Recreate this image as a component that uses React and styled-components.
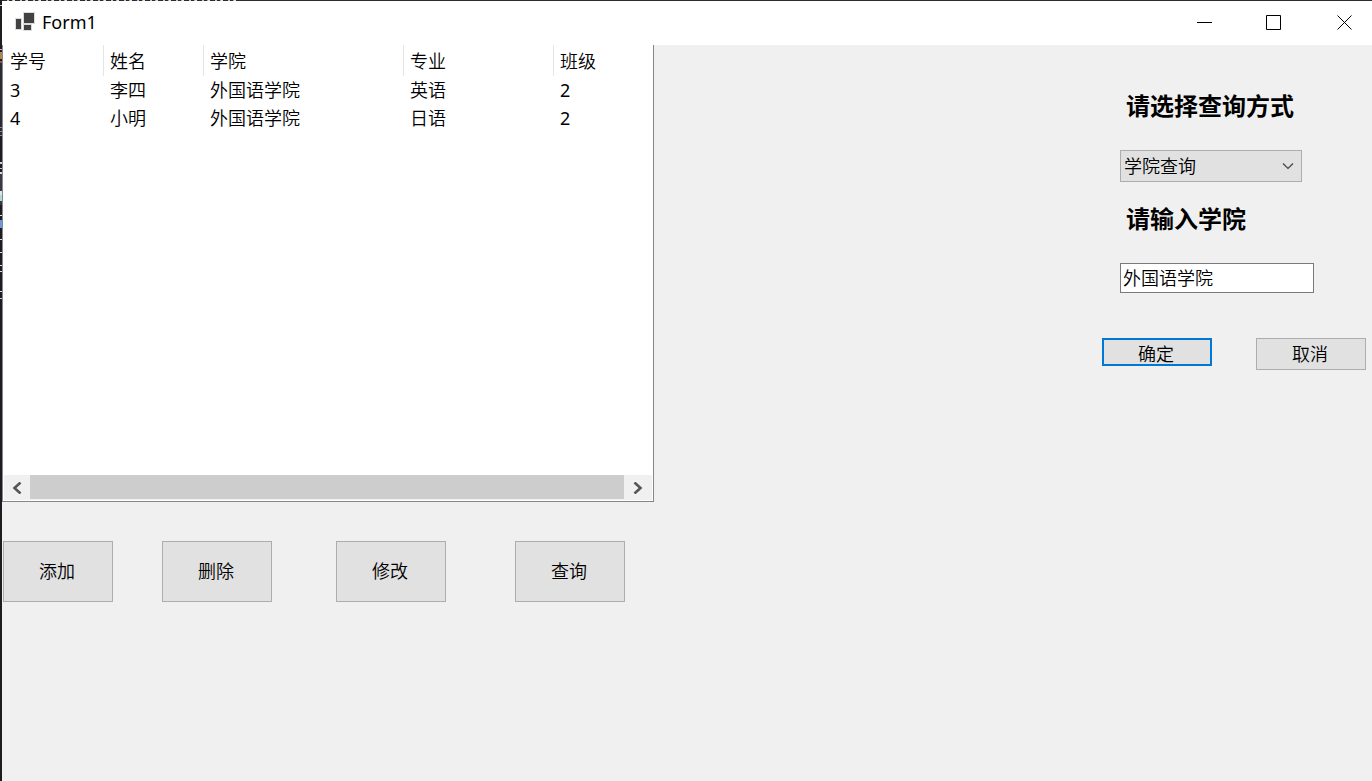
import React, { useState } from "react";
import styled, { createGlobalStyle } from "styled-components";

const GlobalStyle = createGlobalStyle`
  *, *::before, *::after { box-sizing: border-box; }
  body {
    margin: 0;
    background: #f0f0f0;
    color: #000;
    font: 350 18px/28px "Noto Sans", "Noto Sans CJK SC", sans-serif;
  }
  button, input, select { font: inherit; color: inherit; border-radius: 0; }
`;

const topSpecks =
  "repeating-linear-gradient(90deg, #2d2a31 0 5px, #b9c8dc 5px 7px, #2d2a31 7px 10px, #c9a27c 10px 11px, #e4e4e4 11px 13px)";

const leftSpecks = `linear-gradient(180deg,
  #1d1c20 0 5px, #d0d0d0 5px 6px, #1d1c20 6px 49px, #bdbdbd 49px 50px,
  #1d1c20 50px 52px, #b5834f 52px 59px, #1d1c20 59px 61px, #8a5a42 61px 63px,
  #2b2a30 63px 127px, #8a8a8e 127px 128px, #2b2a30 128px 131px, #8a8a8e 131px 132px,
  #2b2a30 132px 135px, #8a8a8e 135px 136px, #1d1c20 136px 162px, #c8d4e4 162px 164px,
  #1d1c20 164px 168px, #d8c0a0 168px 169px, #1d1c20 169px 172px, #d8d8e4 172px 174px,
  #3b3a44 174px 191px, #e4e4dc 191px 195px, #a8dcd8 195px 201px, #3b3a44 201px 205px,
  #1d1c20 205px 215px, #e0e0e0 215px 216px, #1d1c20 216px 220px, #6a9ad8 220px 228px,
  #1d1c20 228px 239px, #e0e0e0 239px 240px, #1d1c20 240px 252px, #e0e0e0 252px 253px,
  #1d1c20 253px 265px, #e0e0e0 265px 266px, #1d1c20 266px 271px, #e0e0e0 271px 272px,
  #1d1c20 272px 291px, #e0e0e0 291px 292px, #1d1c20 292px 298px, #c0c8e0 298px 299px,
  #1d1c20 299px)`;

const Desktop = styled.div`
  display: flex;
  min-height: 100vh;
  padding: 1px 0 0 2px;
  background:
    ${topSpecks} 2px 0 / 234px 1px no-repeat,
    ${leftSpecks} 0 0 / 2px 100% no-repeat,
    #2d2a31;
`;

const Window = styled.div`
  flex: 1;
  display: flex;
  flex-direction: column;
  background: #f0f0f0;
`;

const TitleBar = styled.header`
  display: flex;
  align-items: center;
  gap: 6px;
  height: 44px;
  padding-left: 13px;
  background: #fff;
`;

const Title = styled.h1`
  flex: 1;
  margin: 0;
  padding-bottom: 2px;
  font-size: 18px;
  font-weight: 400;
`;

const Controls = styled.div`
  display: flex;
  gap: 14px;
`;

const ControlButton = styled.button`
  display: flex;
  align-items: center;
  justify-content: center;
  width: 56px;
  height: 44px;
  padding: 0;
  border: 0;
  background: transparent;
`;

const Client = styled.main`
  flex: 1;
  display: flex;
  align-items: flex-start;
  justify-content: space-between;
`;

const ListView = styled.section`
  display: flex;
  flex-direction: column;
  width: 652px;
  height: 457px;
  padding-bottom: 1px;
  border: 1px solid #828790;
  border-top: 0;
  background: #fff;
`;

const ListBody = styled.div`
  flex: 1;
`;

const Table = styled.table`
  table-layout: fixed;
  width: 650px;
  border-collapse: separate;
  border-spacing: 0;
`;

const HeaderCell = styled.th`
  width: ${(p) => p.$width}px;
  height: 31px;
  padding: 0 6px;
  border-right: 1px solid ${(p) => (p.$last ? "#fff" : "#e5e5e5")};
  font-weight: inherit;
  text-align: left;
  &:first-child { padding-left: 7px; }
`;

const Cell = styled.td`
  height: 28px;
  padding: 0 6px;
  font-weight: ${(p) => (p.$numeric ? 400 : "inherit")};
  &:first-child { padding-left: 7px; }
`;

const ScrollBar = styled.div`
  display: flex;
  height: 25px;
  margin: 0 1px;
  background: #f0f0f0;
`;

const ScrollArrow = styled.button`
  display: flex;
  align-items: center;
  justify-content: center;
  width: ${(p) => p.$width}px;
  padding: 0;
  border: 0;
  background: transparent;
`;

const ScrollThumb = styled.div`
  flex: 1;
  height: 24px;
  background: #cdcdcd;
`;

const Actions = styled.div`
  display: grid;
  grid-template-columns: 159px 174px 179px 110px;
  margin: 39px 0 0 1px;
`;

const Button = styled.button`
  width: 110px;
  height: ${(p) => p.$height}px;
  padding: 0 2px 1px 0;
  border: ${(p) => (p.$primary ? "2px solid #0078d7" : "1px solid #adadad")};
  background: #e1e1e1;
`;

const QueryForm = styled.form`
  display: flex;
  flex-direction: column;
  width: 264px;
  margin: 45px 6px 0 0;
`;

const Field = styled.div`
  display: flex;
  flex-direction: column;
  align-items: flex-start;
  padding-left: 18px;
`;

const Label = styled.label`
  height: 32px;
  margin: 0 0 28px 6px;
  font-size: 24px;
  font-weight: 700;
  line-height: 32px;
`;

const SelectBox = styled.div`
  display: grid;
  align-items: center;
  width: 182px;
  margin-bottom: 21px;
  > * { grid-area: 1 / 1; }
  svg { justify-self: end; margin-right: 7px; pointer-events: none; }
`;

const Select = styled.select`
  appearance: none;
  width: 100%;
  height: 32px;
  padding: 0 3px;
  border: 1px solid #adadad;
  background: #e1e1e1;
`;

const Input = styled.input`
  width: 194px;
  height: 30px;
  padding: 0 2px 2px;
  border: 1px solid #7a7a7a;
  background: #fff;
  outline: 0;
`;

const FormButtons = styled.div`
  display: flex;
  align-items: flex-start;
  justify-content: space-between;
  margin-top: 45px;
`;

const columns = [
  { name: "学号", width: 101, numeric: true },
  { name: "姓名", width: 100 },
  { name: "学院", width: 200 },
  { name: "专业", width: 150 },
  { name: "班级", width: 99, numeric: true },
];

const students = [
  ["3", "李四", "外国语学院", "英语", "2"],
  ["4", "小明", "外国语学院", "日语", "2"],
];

const controls = [
  { name: "最小化", d: "M1 7.5H16" },
  { name: "最大化", d: "M0.5 0.5H14.5V14.5H0.5Z" },
  { name: "关闭", d: "M1.5 0.5L15.5 14.5M15.5 0.5L1.5 14.5" },
];

function FormIcon() {
  return (
    <svg width="21" height="22" viewBox="0 0 21 22" aria-hidden="true">
      <g fill="#424242" stroke="#dcdcdc">
        <path d="M0.5 6.5H6.5V17.5H0.5Z" />
        <path d="M8.5 12.5H16.5V18.5H8.5Z" />
        <path d="M8.5 0.5H19.5V11.5H8.5Z" />
      </g>
    </svg>
  );
}

function Arrow({ d }) {
  return (
    <svg width="10" height="12" viewBox="0 0 10 12" aria-hidden="true">
      <path d={d} fill="none" stroke="#555" strokeWidth="2.6" />
    </svg>
  );
}

export default function App() {
  const [mode, setMode] = useState("学院查询");
  const [college, setCollege] = useState("外国语学院");

  return (
    <Desktop>
      <GlobalStyle />
      <Window>
        <TitleBar>
          <FormIcon />
          <Title>Form1</Title>
          <Controls>
            {controls.map((c) => (
              <ControlButton key={c.name} type="button" aria-label={c.name}>
                <svg width="16" height="16" viewBox="0 0 16 16" aria-hidden="true">
                  <path d={c.d} fill="none" stroke="#000" />
                </svg>
              </ControlButton>
            ))}
          </Controls>
        </TitleBar>
        <Client>
          <div>
            <ListView>
              <ListBody>
                <Table>
                  <thead>
                    <tr>
                      {columns.map((c, i) => (
                        <HeaderCell key={c.name} $width={c.width} $last={i === columns.length - 1}>
                          {c.name}
                        </HeaderCell>
                      ))}
                    </tr>
                  </thead>
                  <tbody>
                    {students.map((row) => (
                      <tr key={row[0]}>
                        {row.map((value, i) => (
                          <Cell key={columns[i].name} $numeric={columns[i].numeric}>
                            {value}
                          </Cell>
                        ))}
                      </tr>
                    ))}
                  </tbody>
                </Table>
              </ListBody>
              <ScrollBar>
                <ScrollArrow type="button" aria-label="向左滚动" $width={26}>
                  <Arrow d="M8.5 0.5L2.5 6L8.5 11.5" />
                </ScrollArrow>
                <ScrollThumb />
                <ScrollArrow type="button" aria-label="向右滚动" $width={28}>
                  <Arrow d="M1.5 0.5L7.5 6L1.5 11.5" />
                </ScrollArrow>
              </ScrollBar>
            </ListView>
            <Actions>
              {["添加", "删除", "修改", "查询"].map((name) => (
                <Button key={name} type="button" $height={61}>
                  {name}
                </Button>
              ))}
            </Actions>
          </div>
          <QueryForm onSubmit={(e) => e.preventDefault()}>
            <Field>
              <Label htmlFor="mode">请选择查询方式</Label>
              <SelectBox>
                <Select id="mode" value={mode} onChange={(e) => setMode(e.target.value)}>
                  <option>学院查询</option>
                </Select>
                <svg width="14" height="8" viewBox="0 0 14 8" aria-hidden="true">
                  <path d="M2 1.5L7 6.5L12 1.5" fill="none" stroke="#444" strokeWidth="1.2" />
                </svg>
              </SelectBox>
            </Field>
            <Field>
              <Label htmlFor="college">请输入学院</Label>
              <Input id="college" value={college} onChange={(e) => setCollege(e.target.value)} />
            </Field>
            <FormButtons>
              <Button type="submit" $height={28} $primary>
                确定
              </Button>
              <Button type="button" $height={32}>
                取消
              </Button>
            </FormButtons>
          </QueryForm>
        </Client>
      </Window>
    </Desktop>
  );
}
